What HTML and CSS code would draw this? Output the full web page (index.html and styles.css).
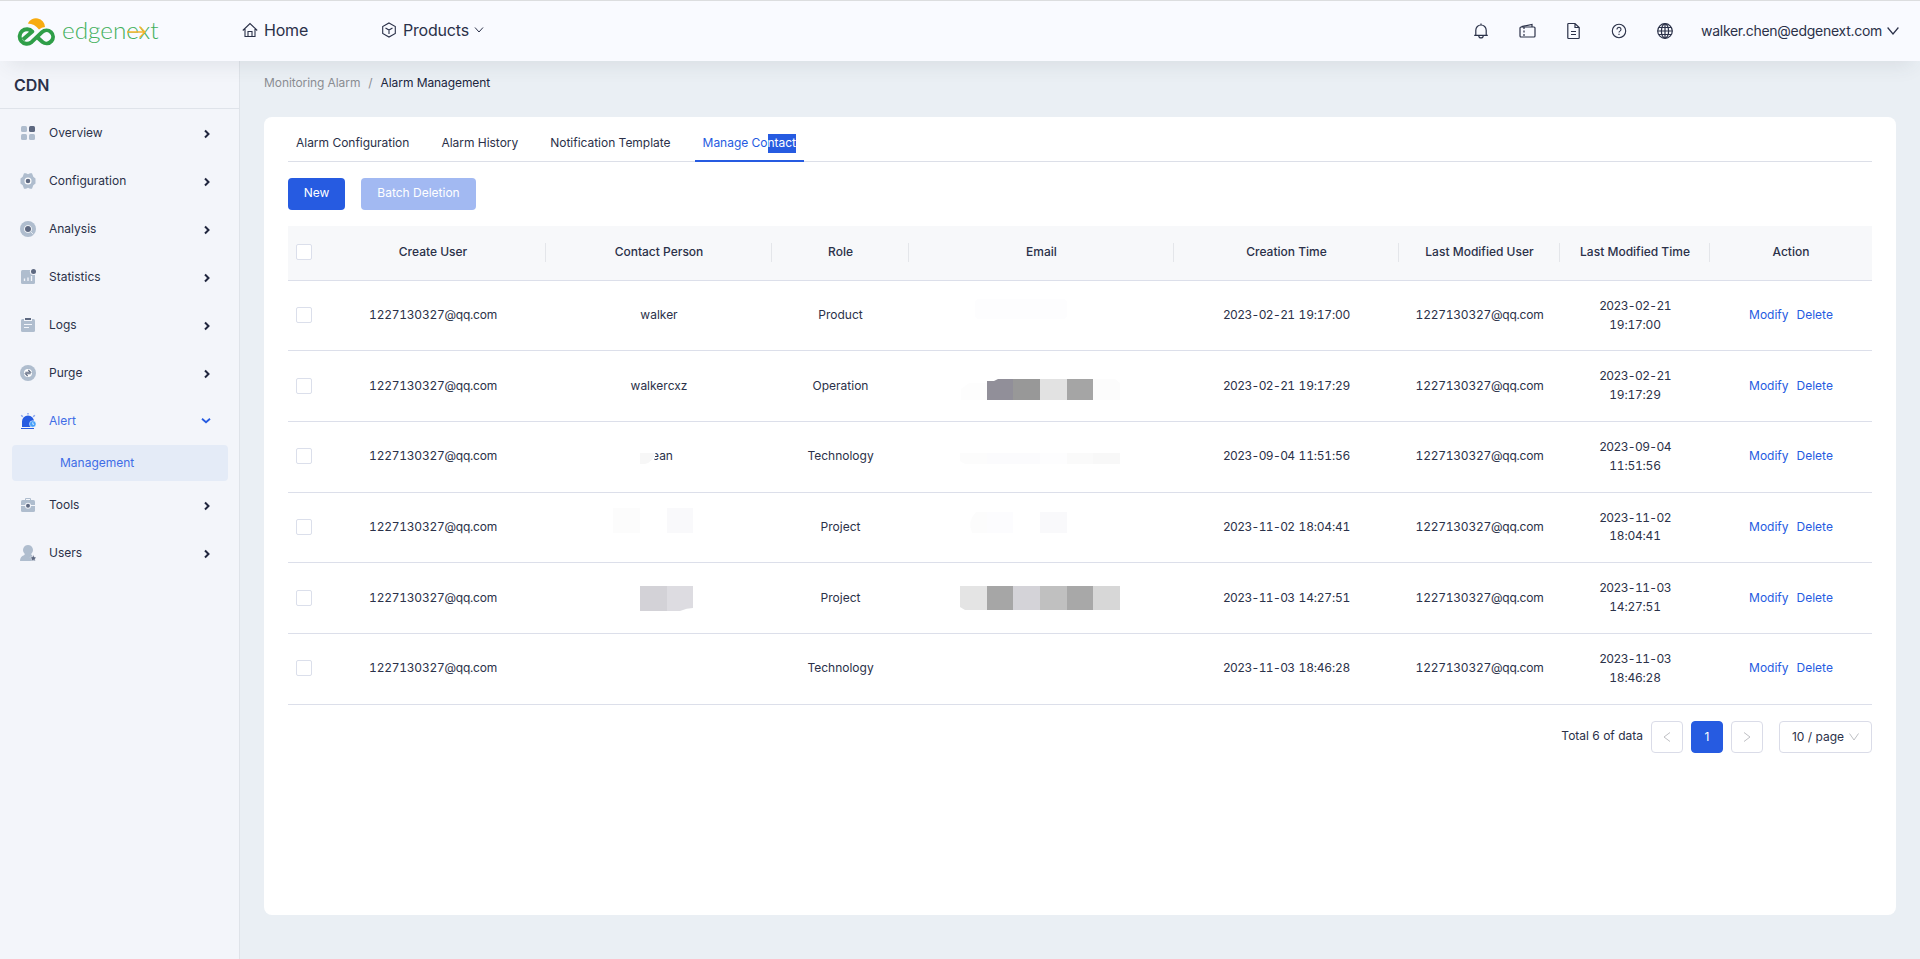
FILE: index.html
```html
<!DOCTYPE html>
<html lang="en">
<head>
    <meta charset="utf-8">
    <title>Alarm Management</title>
    <meta name="viewport" content="width=device-width, initial-scale=1">
    <link rel="stylesheet" href="styles.css">
</head>

<body>
    <header class="topbar">
        <a class="logo">
            <svg width="38" height="32" viewBox="0 0 38 32">
                <path d="M10.800 7.500A9 9 0 0 1 28 11Q24.500 11 22 13.500Q17.500 7.500 10.800 7.500Z" fill="#f8ab10"/>
                <path d="M6 23.500L15.300 15.500A7.300 7.300 0 1 0 14.500 26.200L25 16.200A6.500 6.500 0 1 1 25.500 26L20.500 21.500" fill="none" stroke="#2f9e48" stroke-width="3.900" stroke-linejoin="round"/>
            </svg>
            <span class="logo-text">edgenext
                <svg class="logo-arrow" width="20" height="16" viewBox="0 0 20 16"><path d="M0 8h18M12.500 2.500L18 8l-5.500 5.500"/></svg>
            </span>
        </a>

        <nav class="main-nav">
            <a class="nav-home">
                <svg width="16" height="16" viewBox="0 0 16 16" fill="none" stroke="#2b3149" stroke-width="1.100">
                    <path d="M.8 8.500L8 1.500l7.200 7M3 7v7.500h10V7M6 14.500V9.500h4v5"/>
                </svg>
                <span>Home</span>
            </a>
            <a class="nav-products">
                <svg width="16" height="16" viewBox="0 0 16 16" fill="none" stroke="#2b3149" stroke-width="1.100">
                    <path d="M8 1l6.300 3.500v7L8 15l-6.300-3.500v-7zM4.500 6L8 8l3.500-2M8 8v4"/>
                </svg>
                <span>Products</span>
                <svg class="nav-arrow" width="10" height="8" viewBox="0 0 10 8" fill="none" stroke="#2b3149"><path d="M1 1.500l4 4.500 4-4.500"/></svg>
            </a>
        </nav>

        <div class="tools">
            <svg width="16" height="16" viewBox="0 0 16 16" fill="none" stroke="#2b3149" stroke-width="1.200">
                <path d="M1.200 12.400h13.600M2.800 12.400V7.200a5.200 5.200 0 0 1 10.400 0v5.200M8 2V.5M5.800 12.700a2.200 2.200 0 0 0 4.400 0"/>
            </svg>
            <svg width="18" height="16" viewBox="0 0 18 16" fill="none" stroke="#2b3149" stroke-width="1.200">
                <rect x="1" y="4" width="15" height="10" rx="1"/>
                <path d="M2.500 3.600L13 1.500V4"/>
                <path d="M5 4v10" stroke-dasharray="2 1.500"/>
            </svg>
            <svg width="14" height="18" viewBox="0 0 14 18" fill="none" stroke="#2b3149" stroke-width="1.200">
                <path d="M8 1.500H1.500a.7.7 0 0 0-.7.7v13.600c0 .4.300.7.7.700h10a.7.7 0 0 0 .7-.7V5.500zM8 1.500v4h4.200M4 9.500h5M4 12.500h5"/>
            </svg>
            <svg width="16" height="16" viewBox="0 0 16 16" fill="none" stroke="#2b3149" stroke-width="1.100">
                <circle cx="8" cy="8" r="6.700"/>
                <path d="M6 6.500a2 2 0 1 1 3.200 1.400C8.400 8.400 8 8.700 8 9.600M8 10.800v1.200"/>
            </svg>
            <svg width="16" height="16" viewBox="0 0 16 16" fill="none" stroke="#2b3149" stroke-width="1.200">
                <circle cx="8" cy="8" r="7.300"/>
                <ellipse cx="8" cy="8" rx="3.600" ry="7.200"/>
                <path d="M8 .8v14.400M.8 8h14.400M1.800 4.500h12.400M1.800 11.500h12.400"/>
            </svg>
        </div>

        <a class="account">
            <span>walker.chen@edgenext.com</span>
            <svg width="12" height="10" viewBox="0 0 12 10" fill="none" stroke="#2b3149" stroke-width="1.200"><path d="M.6 1.500L6 8l5.400-6.500"/></svg>
        </a>
    </header>

    <div class="layout">
        <aside class="sidebar">
            <h2>CDN</h2>
            <ul class="menu">
                <li>
                    <svg class="icon" viewBox="0 0 16 16" fill="#afbdce">
                        <rect x="1" y="1" width="6" height="6" rx="1.500"/><rect x="9" y="1" width="6" height="6" rx="1.500" fill="#5d6880"/>
                        <rect x="1" y="9" width="6" height="6" rx="1.500"/><rect x="9" y="9" width="6" height="6" rx="1.500"/>
                    </svg>
                    <span>Overview</span>
                    <svg class="arrow" viewBox="0 0 8 10"><path d="M2 1.500L5.500 5 2 8.500"/></svg>
                </li>
                <li>
                    <svg class="icon" viewBox="0 0 16 16">
                        <path fill="#afbdce" d="M4 .3h2L8 1.300 10 .3h2l1.300 3.500L15.500 5.500v5L13.300 12.200 12 15.700h-2L8 14.700l-2 1H4L2.700 12.200.5 10.500v-5l2.200-1.700z"/>
                        <circle cx="8" cy="8" r="3.500" fill="#fff"/><circle cx="8" cy="8" r="2.300" fill="#5d6880"/>
                    </svg>
                    <span>Configuration</span>
                    <svg class="arrow" viewBox="0 0 8 10"><path d="M2 1.500L5.500 5 2 8.500"/></svg>
                </li>
                <li>
                    <svg class="icon" viewBox="0 0 16 16">
                        <circle cx="8" cy="8" r="8" fill="#afbdce"/><circle cx="8" cy="8" r="3.800" fill="#fff"/>
                        <path d="M10 10l3.500 3.500" stroke="#e3e9f0"/><circle cx="8" cy="8" r="3" fill="#5d6880"/>
                    </svg>
                    <span>Analysis</span>
                    <svg class="arrow" viewBox="0 0 8 10"><path d="M2 1.500L5.500 5 2 8.500"/></svg>
                </li>
                <li>
                    <svg class="icon" viewBox="0 0 16 16">
                        <rect x="1" y="1" width="14" height="14" rx="1.500" fill="#afbdce"/>
                        <path d="M4.500 12V9.500M8 12V8.500M11.500 12V7" stroke="#f3f5fa" stroke-width="1.300"/>
                        <circle cx="13.500" cy="2.500" r="3.600" fill="#f3f5fa"/><circle cx="13.500" cy="2.500" r="2.500" fill="#5d6880"/>
                    </svg>
                    <span>Statistics</span>
                    <svg class="arrow" viewBox="0 0 8 10"><path d="M2 1.500L5.500 5 2 8.500"/></svg>
                </li>
                <li>
                    <svg class="icon" viewBox="0 0 16 16">
                        <rect x="1" y="2" width="14" height="13" rx="1.500" fill="#afbdce"/>
                        <rect x="4" y="0" width="8" height="4" fill="#f3f5fa"/><rect x="5" y="1" width="6" height="2" fill="#5d6880"/>
                        <path d="M4 7.500h8M4 10.500h5" stroke="#f3f5fa"/>
                    </svg>
                    <span>Logs</span>
                    <svg class="arrow" viewBox="0 0 8 10"><path d="M2 1.500L5.500 5 2 8.500"/></svg>
                </li>
                <li>
                    <svg class="icon" viewBox="0 0 16 16">
                        <circle cx="8" cy="8" r="8" fill="#afbdce"/><circle cx="8" cy="8" r="4" fill="#fff"/>
                        <path d="M5.300 7.300h5.200L8.300 5M10.700 8.800H5.500L7.700 11" fill="none" stroke="#5d6880" stroke-width="1.100"/>
                    </svg>
                    <span>Purge</span>
                    <svg class="arrow" viewBox="0 0 8 10"><path d="M2 1.500L5.500 5 2 8.500"/></svg>
                </li>
                <li class="open">
                    <svg class="icon" viewBox="0 0 16 16">
                        <path d="M2 14V8.500a6 6 0 0 1 12 0V14z" fill="#265be1"/><path d="M1 15.500h13" stroke="#265be1"/>
                        <path d="M8 0v1.600M1.200 2.200l1.600 1.600M14.800 2.200l-1.600 1.600" stroke="#86a4ee" stroke-width="1.500"/>
                        <circle cx="12.800" cy="11" r="3.300" fill="#45a0fb" stroke="#f3f5fa" stroke-width=".6"/><path d="M12.800 9.300v2h1.300" fill="none" stroke="#d4eaff"/>
                    </svg>
                    <span>Alert</span>
                    <svg class="arrow-down" viewBox="0 0 10 8"><path d="M1 1.800L5 5.300 9 1.800"/></svg>
                </li>
                <li class="sub">Management</li>
                <li>
                    <svg class="icon" viewBox="0 0 16 16">
                        <path d="M5.500 3V1.500h5V3" fill="none" stroke="#afbdce"/>
                        <rect x="1" y="3" width="14" height="12" rx="1.500" fill="#afbdce"/><path d="M1 8.500h14" stroke="#f3f5fa"/>
                        <circle cx="8" cy="8.700" r="3" fill="#f3f5fa"/><circle cx="8" cy="8.700" r="2" fill="#5d6880"/>
                    </svg>
                    <span>Tools</span>
                    <svg class="arrow" viewBox="0 0 8 10"><path d="M2 1.500L5.500 5 2 8.500"/></svg>
                </li>
                <li>
                    <svg class="icon" viewBox="0 0 16 16">
                        <path fill="#afbdce" d="M8 0a5 5 0 0 1 3.500 8.500c-.5.700-.3 1.300.5 1.700L14 16H0c0-3 1.500-5 4-5.800.8-.4 1-1 .5-1.700A5 5 0 0 1 8 0z"/>
                        <path fill="#5d6880" stroke="#f3f5fa" stroke-width=".5" d="M13.300 9.700l1 2.300 2.200.3-1.600 1.600.4 2.400-2-1.200-2 1.200.4-2.400-1.600-1.600 2.200-.3z"/>
                    </svg>
                    <span>Users</span>
                    <svg class="arrow" viewBox="0 0 8 10"><path d="M2 1.500L5.500 5 2 8.500"/></svg>
                </li>
            </ul>
        </aside>

        <main class="content">
            <div class="breadcrumb"><span>Monitoring Alarm</span><em>/</em><b>Alarm Management</b></div>

            <section class="card">
                <div class="tabs">
                    <a>Alarm Configuration</a>
                    <a>Alarm History</a>
                    <a>Notification Template</a>
                    <a class="active">Manage Co<mark>ntact</mark></a>
                </div>

                <div class="buttons">
                    <button class="btn btn-new">New</button>
                    <button class="btn btn-batch" disabled>Batch Deletion</button>
                </div>

                <table>
                    <colgroup>
                        <col class="c-check"><col class="c-user"><col class="c-user"><col class="c-role"><col class="c-email">
                        <col class="c-created"><col class="c-moduser"><col class="c-modtime"><col class="c-action">
                    </colgroup>
                    <thead>
                        <tr>
                            <th class="plain"><span class="check"></span></th>
                            <th>Create User</th>
                            <th>Contact Person</th>
                            <th>Role</th>
                            <th>Email</th>
                            <th>Creation Time</th>
                            <th>Last Modified User</th>
                            <th>Last Modified Time</th>
                            <th class="plain">Action</th>
                        </tr>
                    </thead>
                    <tbody>
                        <tr>
                            <td><span class="check"></span></td>
                            <td>1227130327@qq.com</td>
                            <td>walker</td>
                            <td>Product</td>
                            <td>
                                <svg class="mosaic" width="265" height="70"><rect x="66" y="18" width="92" height="20" rx="4" fill="#fdfdfe"/></svg>
                            </td>
                            <td><span class="date">2023-02-21</span> 19:17:00</td>
                            <td>1227130327@qq.com</td>
                            <td><span class="date">2023-02-21</span> 19:17:00</td>
                            <td><a>Modify</a><a>Delete</a></td>
                        </tr>
                        <tr>
                            <td><span class="check"></span></td>
                            <td>1227130327@qq.com</td>
                            <td>walkercxz</td>
                            <td>Operation</td>
                            <td>
                                <svg class="mosaic" width="265" height="70">
                                    <path d="M52 49V38l8-6h18v17z" fill="#fdfdfd"/>
                                    <path d="M78 49V30h7l4-2h15v21z" fill="#918f99"/>
                                    <rect x="104" y="28" width="27" height="21" fill="#989898"/>
                                    <rect x="131" y="28" width="27" height="21" fill="#e2e2e2"/>
                                    <rect x="158" y="28" width="26" height="21" fill="#a5a5a5"/>
                                    <path d="M184 28h22l5 4v17h-27z" fill="#fcfcfc"/>
                                </svg>
                            </td>
                            <td><span class="date">2023-02-21</span> 19:17:29</td>
                            <td>1227130327@qq.com</td>
                            <td><span class="date">2023-02-21</span> 19:17:29</td>
                            <td><a>Modify</a><a>Delete</a></td>
                        </tr>
                        <tr>
                            <td><span class="check"></span></td>
                            <td>1227130327@qq.com</td>
                            <td>
                                <span class="cut-name">ean</span>
                                <svg class="mosaic" width="226" height="70">
                                    <path d="M104 26h5q2 9-3 15h-2z" fill="#fff"/>
                                    <path d="M94 31h15q-2 9-10 11h-5z" fill="#f7f7f7"/>
                                </svg>
                            </td>
                            <td>Technology</td>
                            <td>
                                <svg class="mosaic" width="265" height="70">
                                    <path d="M51 31h27v11H56l-5-3z" fill="#fcfcfc"/>
                                    <rect x="78" y="31" width="53" height="11" fill="#fbfbfd"/>
                                    <rect x="131" y="31" width="27" height="11" fill="#fdfdfe"/>
                                    <rect x="158" y="31" width="26" height="11" fill="#fafafa"/>
                                    <rect x="184" y="31" width="27" height="11" fill="#f8f8f8"/>
                                </svg>
                            </td>
                            <td><span class="date">2023-09-04</span> 11:51:56</td>
                            <td>1227130327@qq.com</td>
                            <td><span class="date">2023-09-04</span> 11:51:56</td>
                            <td><a>Modify</a><a>Delete</a></td>
                        </tr>
                        <tr>
                            <td><span class="check"></span></td>
                            <td>1227130327@qq.com</td>
                            <td>
                                <svg class="mosaic" width="226" height="70">
                                    <rect x="67" y="15" width="27" height="25" fill="#fcfcfc"/>
                                    <rect x="121" y="15" width="26" height="25" fill="#f9f9fb"/>
                                </svg>
                            </td>
                            <td>Project</td>
                            <td>
                                <svg class="mosaic" width="265" height="70">
                                    <path d="M78 19v21H63q-5-12 4-21z" fill="#fcfcfc"/>
                                    <rect x="78" y="19" width="26" height="21" fill="#fcfcfe"/>
                                    <rect x="131" y="19" width="27" height="21" fill="#f9f9fb"/>
                                </svg>
                            </td>
                            <td><span class="date">2023-11-02</span> 18:04:41</td>
                            <td>1227130327@qq.com</td>
                            <td><span class="date">2023-11-02</span> 18:04:41</td>
                            <td><a>Modify</a><a>Delete</a></td>
                        </tr>
                        <tr>
                            <td><span class="check"></span></td>
                            <td>1227130327@qq.com</td>
                            <td>
                                <svg class="mosaic" width="226" height="70">
                                    <rect x="94" y="23" width="27" height="25" fill="#d3d2d7"/>
                                    <path d="M121 23h26v22q-6 0-13 3h-13z" fill="#dddce1"/>
                                </svg>
                            </td>
                            <td>Project</td>
                            <td>
                                <svg class="mosaic" width="265" height="70">
                                    <path d="M51 23h27v24H56l-5-3z" fill="#e4e4e4"/>
                                    <rect x="78" y="23" width="26" height="24" fill="#a6a6a6"/>
                                    <rect x="104" y="23" width="27" height="24" fill="#d4d3d8"/>
                                    <rect x="131" y="23" width="27" height="24" fill="#c0c0c0"/>
                                    <rect x="158" y="23" width="26" height="24" fill="#a8a8a8"/>
                                    <rect x="184" y="23" width="27" height="24" fill="#d7d7d7"/>
                                </svg>
                            </td>
                            <td><span class="date">2023-11-03</span> 14:27:51</td>
                            <td>1227130327@qq.com</td>
                            <td><span class="date">2023-11-03</span> 14:27:51</td>
                            <td><a>Modify</a><a>Delete</a></td>
                        </tr>
                        <tr>
                            <td><span class="check"></span></td>
                            <td>1227130327@qq.com</td>
                            <td></td>
                            <td>Technology</td>
                            <td></td>
                            <td><span class="date">2023-11-03</span> 18:46:28</td>
                            <td>1227130327@qq.com</td>
                            <td><span class="date">2023-11-03</span> 18:46:28</td>
                            <td><a>Modify</a><a>Delete</a></td>
                        </tr>
                    </tbody>
                </table>

                <div class="pagination">
                    <span class="total">Total 6 of data</span>
                    <a class="page"><svg width="8" height="12" viewBox="0 0 8 12"><path d="M7 1.500L1 6l6 4.500"/></svg></a>
                    <a class="page current">1</a>
                    <a class="page"><svg width="8" height="12" viewBox="0 0 8 12"><path d="M1 1.500L7 6l-6 4.500"/></svg></a>
                    <a class="page-size"><span>10 / page</span><svg width="10" height="8" viewBox="0 0 10 8"><path d="M.5 .5L5 7 9.500 .5"/></svg></a>
                </div>
            </section>
        </main>
    </div>
</body>
</html>
```

FILE: styles.css
```css
* {
    box-sizing: border-box;
}

body {
    margin: 0;
    height: 959px;
    font-family: Inter, "Liberation Sans", sans-serif;
    font-size: 12px;
    line-height: 18.86px;
    color: #2b3149;
    background-color: #eaeff4;
    overflow: hidden;
}

/* top bar */
.topbar {
    position: relative;
    z-index: 2;
    display: flex;
    align-items: center;
    height: 61px;
    padding: 0 21px 1px 0;
    border-top: 1px solid #dcdddf;
    background-color: #f9faff;
    box-shadow: 0 12px 20px -8px rgba(60, 70, 80, 0.1);
}

.logo {
    display: flex;
    width: 242px;
    padding: 2px 0 0 17px;
}

.logo-text {
    position: relative;
    margin-left: 7px;
    font-family: Lato, sans-serif;
    font-size: 24.3px;
    font-weight: 300;
    line-height: 28px;
    color: #43b05c;
}

/* orange arrow laid over the "ex" */
.logo-arrow {
    position: absolute;
    top: 8px;
    left: 65px;
    fill: none;
    stroke: #f8b42a;
    stroke-width: 1.3;
}

.main-nav {
    display: flex;
    flex: 1;
    font-size: 16px;
    letter-spacing: -0.2px;
}

.main-nav a {
    display: flex;
    align-items: center;
}

.main-nav span {
    margin-left: 6px;
}

.nav-home {
    width: 139px;
}

.main-nav .nav-arrow {
    margin-left: 5px;
}

.tools {
    display: flex;
    align-items: center;
    gap: 30px;
    padding-top: 1px;
}

.account {
    display: flex;
    align-items: center;
    gap: 5px;
    margin-left: 28px;
    padding-top: 1px;
    font-size: 14px;
    letter-spacing: -0.28px;
}

.layout {
    display: flex;
    height: 898px;
}

/* sidebar */
.sidebar {
    width: 240px;
    border-right: 1px solid #dfe3e9;
    background-color: #f3f5fa;
}

.sidebar h2 {
    height: 48px;
    margin: 0;
    padding-left: 14px;
    border-bottom: 1px solid #dfe3ea;
    font-size: 16px;
    font-weight: 600;
    line-height: 48px;
}

.menu {
    margin: 0;
    padding: 0;
    list-style: none;
}

.menu li {
    display: flex;
    align-items: center;
    height: 48px;
    padding: 0 28px 0 20px;
}

.menu span {
    flex: 1;
    margin-left: 13px;
}

.icon {
    width: 16px;
    height: 16px;
}

.arrow,
.arrow-down {
    width: 8px;
    height: 10px;
    margin-top: 2px;
    fill: none;
    stroke: #20263e;
    stroke-width: 2;
}

.arrow-down {
    width: 10px;
    height: 8px;
    margin-top: 0;
    stroke: #265be1;
    stroke-width: 1.8;
}

.menu .open {
    color: #3f6de6;
}

.menu .sub {
    height: 36px;
    margin: 0 11px 0 12px;
    padding-left: 48px;
    border-radius: 4px;
    color: #3f6de6;
    background-color: #e4ebf7;
}

/* content */
.content {
    flex: 1;
    padding: 13px 24px 0;
}

.breadcrumb {
    height: 43px;
    letter-spacing: -0.08px;
    color: #8a8d93;
}

.breadcrumb em {
    margin: 0 8px;
    font-style: normal;
}

.breadcrumb b {
    font-weight: 400;
    color: #20263e;
}

.card {
    height: 798px;
    padding: 0 24px;
    border-radius: 8px;
    background-color: #fff;
}

.tabs {
    display: flex;
    gap: 16px;
    height: 45px;
    border-bottom: 1px solid #dcdfe8;
    letter-spacing: -0.02px;
}

.tabs a {
    height: 45px;
    padding: 16px 8px 0;
    line-height: 19px;
}

.tabs .active {
    border-bottom: 2px solid #265be1;
    color: #265be1;
}

.tabs mark {
    display: inline-block;
    height: 19px;
    margin-top: 1px;
    line-height: 17px;
    color: #fff;
    background-color: #265be1;
}

.buttons {
    display: flex;
    gap: 16px;
    padding: 16px 0;
}

.btn {
    height: 32px;
    padding: 0 0 3px;
    border: none;
    border-radius: 4px;
    font-family: inherit;
    font-size: 12px;
    color: #fff;
}

.btn-new {
    width: 57px;
    background-color: #265be1;
}

.btn-batch {
    width: 115px;
    background-color: #a2b9f2;
}

table {
    width: 1584px;
    table-layout: fixed;
    border-collapse: separate;
    border-spacing: 0;
    text-align: center;
    font-variant-numeric: tabular-nums;
}

.c-check { width: 32px; }
.c-user { width: 226px; }
.c-role { width: 137px; }
.c-email { width: 265px; }
.c-created { width: 225px; }
.c-moduser { width: 161px; }
.c-modtime { width: 150px; }
.c-action { width: 162px; }

th {
    position: relative;
    height: 54.7px;
    padding: 0 8px 1px;
    border-bottom: 1px solid #dcdfea;
    font-weight: 500;
    background-color: #f7f8fa;
}

/* column divider */
th::after {
    content: "";
    position: absolute;
    top: 17px;
    right: 0;
    width: 1px;
    height: 19px;
    background-color: #e4e6ea;
}

th.plain::after {
    display: none;
}

td {
    position: relative;
    height: 70.67px;
    padding: 0 31px;
    border-bottom: 1px solid #dcdfea;
}

th:first-child,
td:first-child {
    padding: 0 8px 1px;
}

td:nth-child(2),
td:nth-child(6),
td:nth-child(7),
td:last-child {
    padding: 0 8px;
}

td:nth-child(2),
td:nth-child(7) {
    letter-spacing: -0.24px;
}

td:nth-child(6),
td:nth-child(8) {
    letter-spacing: -0.2px;
    word-spacing: 1px;
}

.date {
    letter-spacing: -0.62px;
}

td a {
    margin: 0 4px;
    color: #265be1;
}

.check {
    display: block;
    width: 16px;
    height: 16px;
    border: 1px solid #dbdfeb;
    border-radius: 2px;
    background-color: #fff;
}

/* hidden personal data */
.mosaic {
    position: absolute;
    top: 0;
    left: 0;
}

.cut-name {
    margin-left: 7px;
}

.pagination {
    display: flex;
    justify-content: flex-end;
    gap: 8px;
    padding-top: 16px;
}

.total {
    line-height: 30px;
}

.page,
.page-size {
    display: flex;
    align-items: center;
    justify-content: center;
    width: 32px;
    height: 32px;
    padding-top: 1px;
    border: 1px solid #dadce8;
    border-radius: 4px;
}

.pagination svg {
    fill: none;
    stroke: #bfc0c4;
}

.current {
    border-color: #265be1;
    color: #fff;
    background-color: #265be1;
}

.page-size {
    gap: 5px;
    width: 93px;
    margin-left: 8px;
}
```
